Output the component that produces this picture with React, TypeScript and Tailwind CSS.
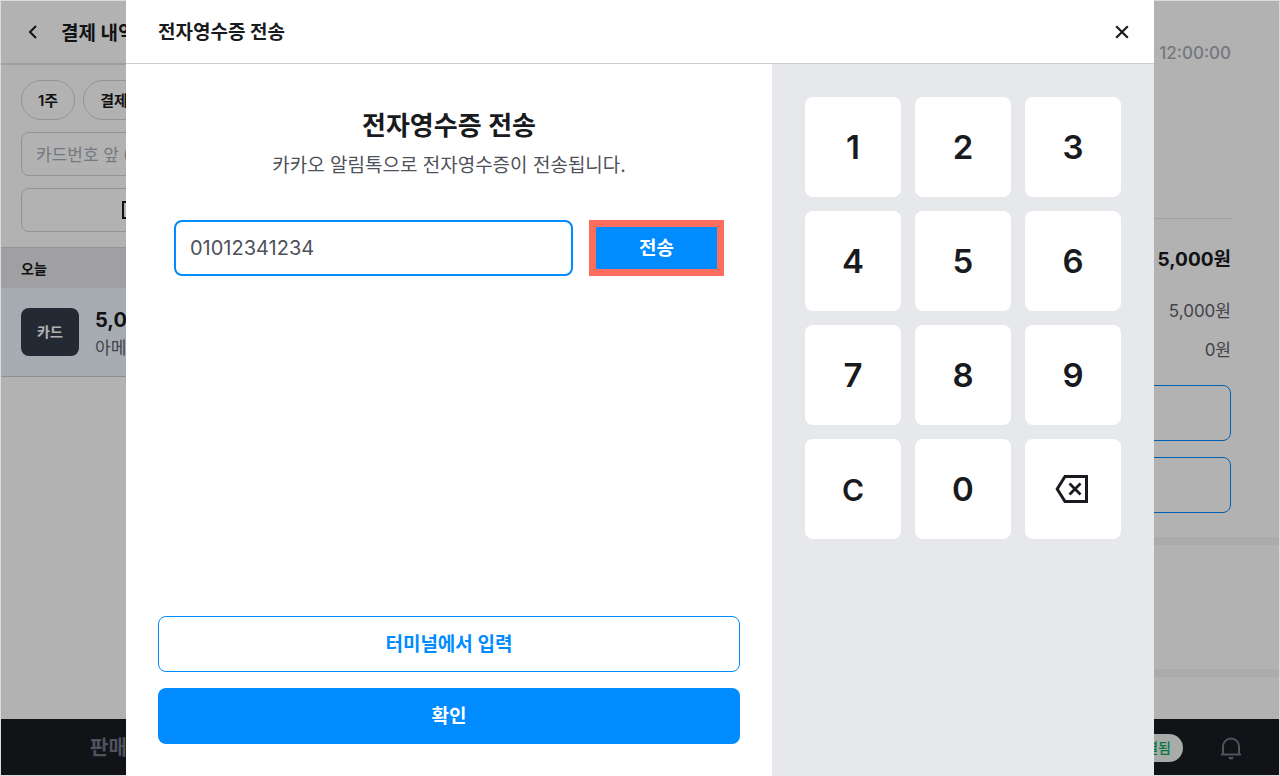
import { useState } from 'react'

const keys = ['1', '2', '3', '4', '5', '6', '7', '8', '9', 'C', '0', 'back']

function BackIcon() {
  return (
    <svg width="24" height="24" viewBox="0 0 24 24" fill="none" stroke="currentColor" strokeWidth="2">
      <path d="M15 6 9 12l6 6" />
    </svg>
  )
}

function CloseIcon() {
  return (
    <svg width="24" height="24" viewBox="0 0 24 24" fill="none" stroke="currentColor" strokeWidth="2.2">
      <path d="M6.200 6.200l11.600 11.600M17.800 6.200 6.200 17.800" />
    </svg>
  )
}

function ReceiptIcon() {
  return (
    <svg width="20" height="20" viewBox="0 0 20 20" fill="none" stroke="currentColor" strokeWidth="2">
      <path d="M2 2h16v16H2zM6 7h8M6 11h8" />
    </svg>
  )
}

function BackspaceIcon() {
  return (
    <svg width="40" height="40" viewBox="0 0 40 40" fill="none" stroke="currentColor">
      <path d="M12 6.500h21.500v25H12L4.200 19z" strokeWidth="3" />
      <path d="M16.500 13.500l11 11M27.500 13.500l-11 11" strokeWidth="2.8" />
    </svg>
  )
}

function BellIcon() {
  return (
    <svg width="24" height="24" viewBox="0 0 24 24" fill="none" stroke="currentColor" strokeWidth="2">
      <path d="M4 18.500v-8a8 8 0 0 1 16 0v8M2 18.500h20" />
      <path d="M9.500 21h5a2.500 2.500 0 0 1-5 0z" fill="currentColor" stroke="none" />
    </svg>
  )
}

function HistoryPanel() {
  return (
    <aside className="w-[346px] shrink-0">
      <header className="flex h-16 items-center gap-4 border-b-2 border-[#e4e4e4] px-5">
        <button aria-label="뒤로">
          <BackIcon />
        </button>
        <h1 className="pt-1 text-[19px] font-bold">결제 내역</h1>
      </header>
      <div className="flex flex-col gap-3 px-5 py-[15px]">
        <div className="flex gap-2 text-[15px] font-semibold">
          <button className="h-10 rounded-full border border-[#d5d5d5] px-4 pt-0.5">1주</button>
          <button className="h-10 rounded-full border border-[#d5d5d5] px-4 pt-0.5">결제 상태</button>
        </div>
        <input
          aria-label="카드번호"
          placeholder="카드번호 앞 6자리"
          className="h-11 w-full rounded-lg border border-[#d5d5d5] px-3.5 pt-0.5 text-[17px] placeholder:text-[#a9adb8]"
        />
        <button className="flex h-11 items-center justify-center gap-2 rounded-lg border border-[#d5d5d5] text-base font-medium">
          <ReceiptIcon />
          바코드 조회
        </button>
      </div>
      <h2 className="h-[41px] border-t border-[#d5d5d5] bg-[#e6e6e8] px-5 text-sm leading-[41px] font-semibold">오늘</h2>
      <div className="flex h-[89px] items-center gap-4 border-b border-[#c8ccd2] bg-[#f0f7ff] px-5">
        <span className="flex h-12 w-[58px] items-center justify-center rounded-lg bg-[#333d4b] text-sm font-semibold text-white">카드</span>
        <div className="pt-1">
          <p className="text-xl leading-7 font-bold">5,000원</p>
          <p className="text-[17px] leading-7 text-[#5c616c]">아메리카노</p>
        </div>
      </div>
    </aside>
  )
}

function DetailPanel() {
  return (
    <main className="flex-1">
      <section className="px-12 pb-6">
        <p className="flex h-[218px] items-start justify-end border-b border-[#e4e4e4] pt-10 text-[17px] font-medium text-[#a9adb8]">12:00:00</p>
        <p className="pt-[27px] text-right text-[19px] leading-7 font-bold">5,000원</p>
        <p className="pt-[23px] text-right text-[17px] leading-7 text-[#5c616c]">5,000원</p>
        <p className="pt-[11px] text-right text-[17px] leading-7 text-[#5c616c]">0원</p>
        <div className="mt-[21px] flex flex-col gap-4 text-[19px] font-medium text-[#008cff]">
          <button className="h-14 rounded-lg border border-[#008cff]">출력</button>
          <button className="h-14 rounded-lg border border-[#008cff]">취소</button>
        </div>
      </section>
      <div className="h-[132px] border-t-8 border-[#f5f5f5]" />
      <div className="border-t-8 border-[#f5f5f5]" />
    </main>
  )
}

function Keypad({ onPress }: { onPress: (key: string) => void }) {
  return (
    <div className="w-[382px] shrink-0 bg-[#e6e8ec] p-[33px]">
      <div className="grid grid-cols-3 gap-3.5">
        {keys.map((key) => (
          <button
            key={key}
            onClick={() => onPress(key)}
            aria-label={key === 'back' ? '지우기' : key}
            className={`flex h-[100px] items-center justify-center rounded-lg bg-white pt-0.5 font-semibold ${
              key === 'C' ? 'text-3xl' : 'text-[33px]'
            }`}
          >
            {key === 'back' ? <BackspaceIcon /> : key}
          </button>
        ))}
      </div>
    </div>
  )
}

function ReceiptModal() {
  const [phone, setPhone] = useState('01012341234')

  const press = (key: string) => {
    if (key === 'C') setPhone('')
    else if (key === 'back') setPhone((prev) => prev.slice(0, -1))
    else setPhone((prev) => prev + key)
  }

  return (
    <div role="dialog" aria-label="전자영수증 전송" className="flex w-full max-w-[1028px] flex-col bg-white">
      <header className="flex h-16 shrink-0 items-center justify-between border-b border-[#cccccc] pr-5 pl-8">
        <h2 className="pt-1 text-[19px] font-bold">전자영수증 전송</h2>
        <button aria-label="닫기">
          <CloseIcon />
        </button>
      </header>
      <div className="flex flex-1">
        <div className="flex flex-1 flex-col px-8 pt-10 pb-8">
          <h3 className="text-center text-[26px] leading-[44px] font-semibold">전자영수증 전송</h3>
          <p className="text-center text-[19px] leading-9 text-[#4e5159]">카카오 알림톡으로 전자영수증이 전송됩니다.</p>
          <div className="mt-9 flex gap-4 px-4">
            <input
              aria-label="휴대폰 번호"
              value={phone}
              onChange={(e) => setPhone(e.target.value)}
              className="h-14 min-w-0 flex-1 rounded-lg border-2 border-[#008cff] px-3.5 text-xl text-[#4e5159] outline-none"
            />
            <button className="h-14 w-[135px] border-[7px] border-[#fb6d5c] bg-[#008cff] pt-0.5 text-[19px] font-semibold text-white">전송</button>
          </div>
          <div className="mt-auto flex flex-col gap-4 text-[19px] font-semibold">
            <button className="h-14 rounded-lg border border-[#008cff] pt-0.5 text-[#008cff]">터미널에서 입력</button>
            <button className="h-14 rounded-lg bg-[#008cff] pt-0.5 text-white">확인</button>
          </div>
        </div>
        <Keypad onPress={press} />
      </div>
    </div>
  )
}

export default function App() {
  return (
    <div className="relative flex min-h-screen flex-col border border-[#dcdcdc] bg-white font-['Inter','Noto_Sans_CJK_KR',sans-serif] text-[#191a20]">
      <div className="flex flex-1">
        <HistoryPanel />
        <DetailPanel />
      </div>
      <footer className="flex h-14 items-center justify-between bg-[#1a1c21] pt-0.5 pr-9 text-[#707888]">
        <nav className="pl-[89px]">
          <a href="#sales" className="text-xl font-semibold">판매</a>
        </nav>
        <div className="flex items-center gap-9">
          <span className="flex h-7 items-center rounded-full bg-[#f0f7f2] px-3 text-sm font-medium text-[#0fa968]">연결됨</span>
          <button aria-label="알림">
            <BellIcon />
          </button>
        </div>
      </footer>
      <div className="absolute inset-0 bg-black/30" />
      <div className="absolute -inset-px flex justify-center">
        <ReceiptModal />
      </div>
    </div>
  )
}
